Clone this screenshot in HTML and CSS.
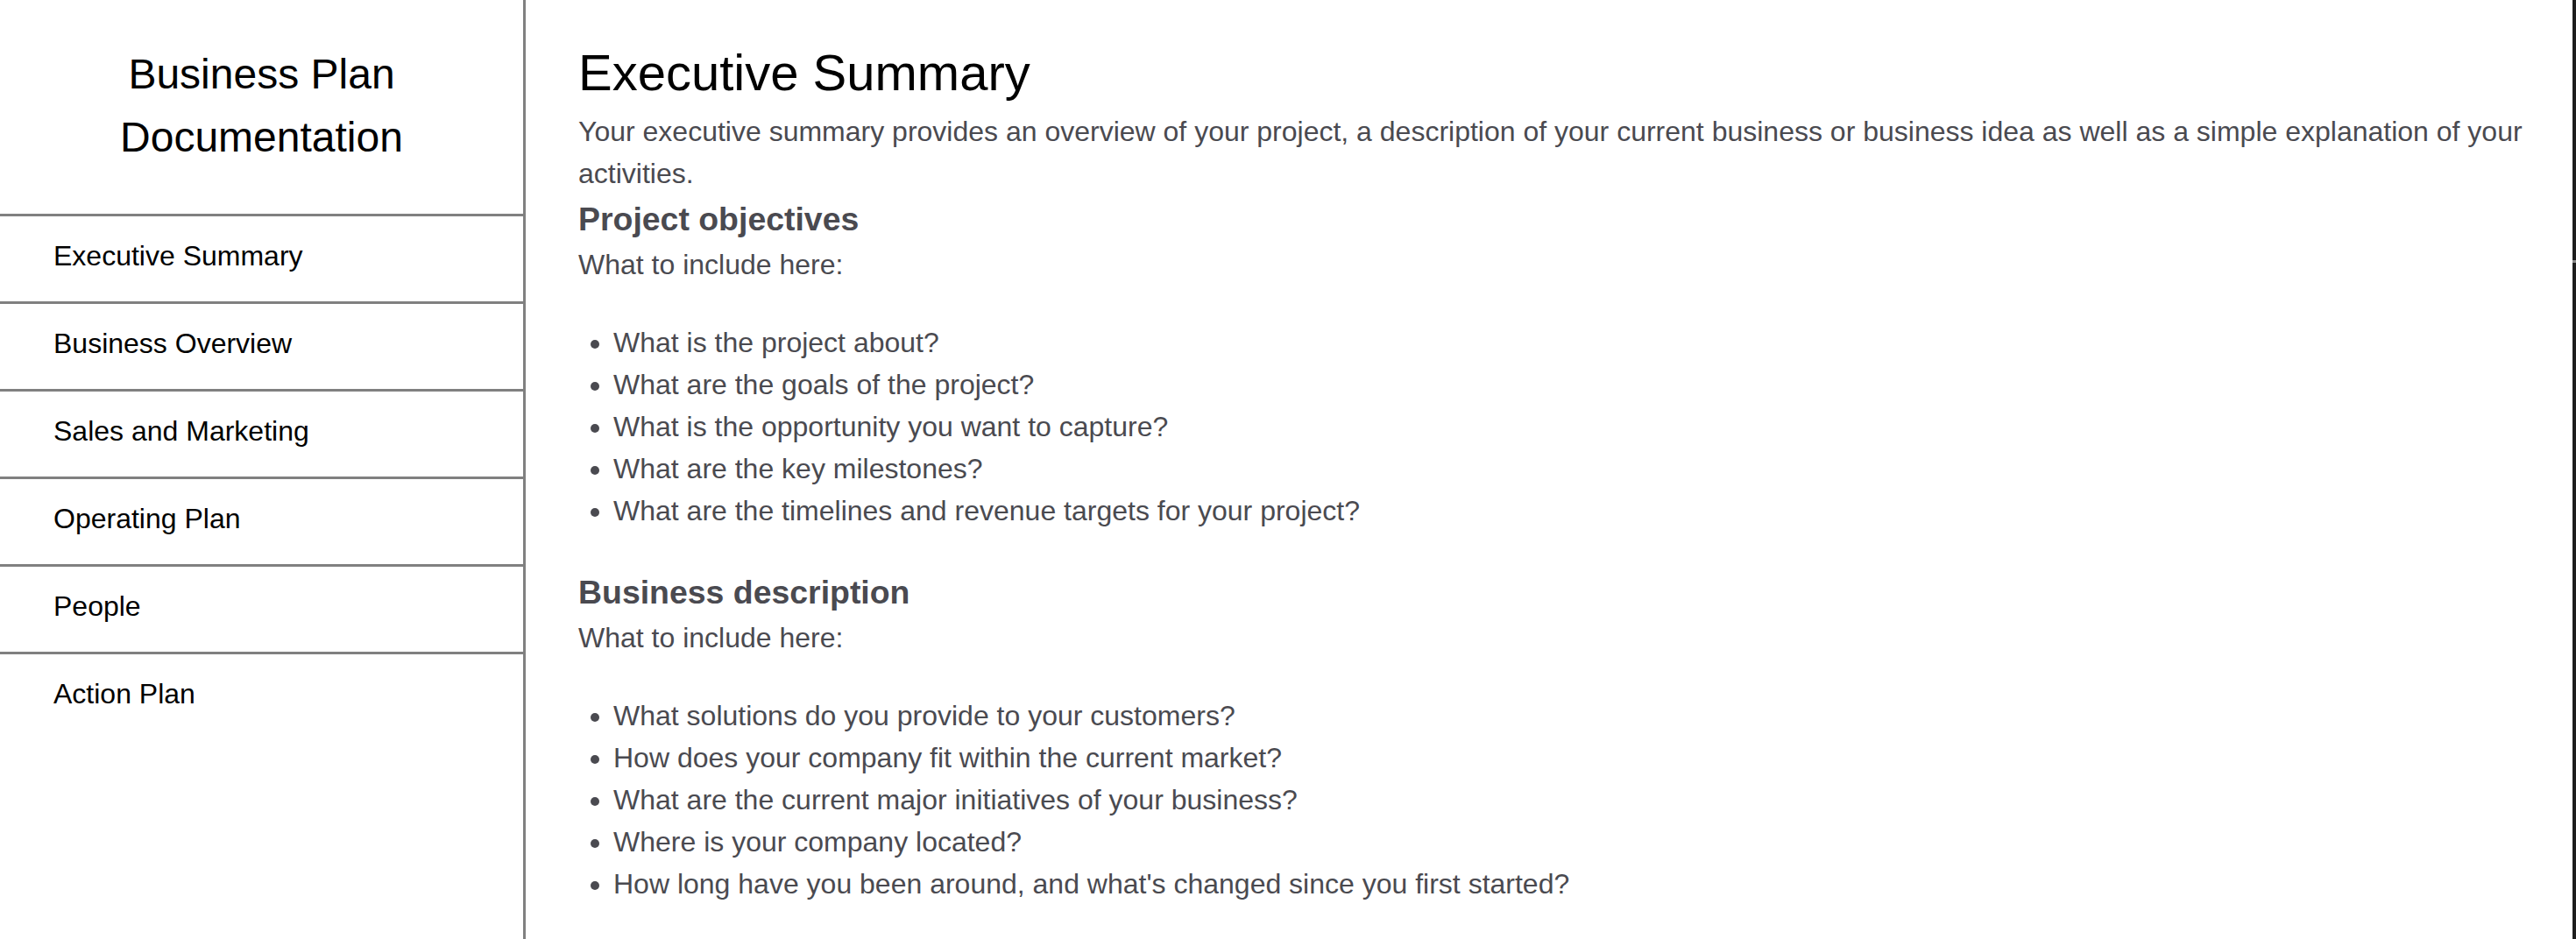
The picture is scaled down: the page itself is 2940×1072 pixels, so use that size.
FILE: index.html
```html
<!DOCTYPE html>
<html lang="en">
<head>
<meta charset="utf-8">
<title>Business Plan Documentation</title>
<link rel="stylesheet" href="styles.css">
</head>
<body>
<div class="layout">
  <aside class="sidebar">
    <h2 class="brand">Business Plan<br>Documentation</h2>
    <nav class="nav">
      <a class="nav-item" href="#">Executive Summary</a>
      <a class="nav-item" href="#">Business Overview</a>
      <a class="nav-item" href="#">Sales and Marketing</a>
      <a class="nav-item" href="#">Operating Plan</a>
      <a class="nav-item" href="#">People</a>
      <a class="nav-item" href="#">Action Plan</a>
    </nav>
  </aside>
  <main class="content">
    <h1 class="title">Executive Summary</h1>
    <p class="text">Your executive summary provides an overview of your project, a description of your current business or business idea as well as a simple explanation of your activities.</p>
    <h3 class="subtitle">Project objectives</h3>
    <p class="text lead">What to include here:</p>
    <ul class="list">
      <li>What is the project about?</li>
      <li>What are the goals of the project?</li>
      <li>What is the opportunity you want to capture?</li>
      <li>What are the key milestones?</li>
      <li>What are the timelines and revenue targets for your project?</li>
    </ul>
    <h3 class="subtitle">Business description</h3>
    <p class="text lead">What to include here:</p>
    <ul class="list">
      <li>What solutions do you provide to your customers?</li>
      <li>How does your company fit within the current market?</li>
      <li>What are the current major initiatives of your business?</li>
      <li>Where is your company located?</li>
      <li>How long have you been around, and what's changed since you first started?</li>
    </ul>
  </main>
  <div class="edge"><div class="edge-mark"></div></div>
</div>
</body>
</html>
```

FILE: styles.css
```css
html, body {
  margin: 0;
  padding: 0;
  background: #ffffff;
}

body {
  font-family: "Liberation Sans", Arial, Helvetica, sans-serif;
  font-size: 32px;
  line-height: 48px;
  color: #4a4a50;
}

.layout {
  display: flex;
  min-height: 100vh;
  height: 1072px;
  overflow: hidden;
}

.sidebar {
  flex: 0 0 597px;
  width: 597px;
  border-right: 3px solid #808080;
  display: flex;
  flex-direction: column;
}

.brand {
  margin: 0;
  padding: 49px 0 51px;
  font-size: 48px;
  line-height: 72px;
  font-weight: normal;
  text-align: center;
  color: #000000;
}

.nav {
  display: flex;
  flex-direction: column;
}

.nav-item {
  display: block;
  border-top: 3px solid #808080;
  padding: 21px 0 28px 61px;
  font-size: 32px;
  line-height: 48px;
  color: #000000;
  text-decoration: none;
}

.content {
  flex: 1 1 auto;
  min-width: 0;
  padding: 47px 20px 0 60px;
}

.title {
  margin: 0 0 7px;
  font-size: 58px;
  line-height: 72px;
  font-weight: normal;
  color: #000000;
}

.text {
  margin: 0;
}

.lead {
  margin-bottom: 41px;
}

.subtitle {
  margin: 0;
  font-size: 37.44px;
  line-height: 56px;
  font-weight: bold;
  color: #4a4a50;
}

.list {
  margin: 0 0 41px;
  padding-left: 40px;
}

.list li {
  line-height: 48px;
}

.edge {
  flex: 0 0 4px;
  width: 4px;
  background: #1e1e1e;
}

.edge-mark {
  margin-top: 297px;
  height: 3px;
  background: #8a8a8a;
}
```
